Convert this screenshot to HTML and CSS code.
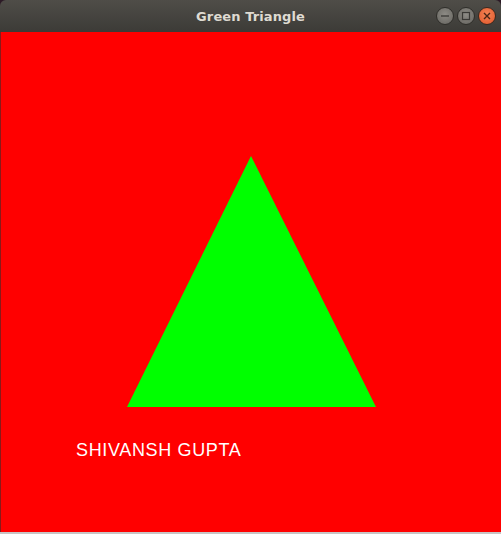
FILE: index.html
```html
<!DOCTYPE html>
<html>
<head>
<meta charset="utf-8">
<link rel="stylesheet" href="styles.css">
</head>
<body>
<div class="window">
  <div class="titlebar">
    <div class="title">Green Triangle</div>
    <div class="controls">
      <span class="btn btn-min"><svg width="18" height="18" viewBox="0 0 18 18"><line x1="5" y1="9" x2="13" y2="9" stroke="#3a3935" stroke-width="1.3"/></svg></span>
      <span class="btn btn-max"><svg width="18" height="18" viewBox="0 0 18 18"><rect x="5.5" y="5.5" width="7" height="7" fill="none" stroke="#3a3935" stroke-width="1.2"/></svg></span>
      <span class="btn btn-close"><svg width="18" height="18" viewBox="0 0 18 18"><path d="M6 6 L12 12 M12 6 L6 12" stroke="#4a2414" stroke-width="1.4"/></svg></span>
    </div>
  </div>
  <div class="canvas">
    <svg class="scene" width="500" height="500" viewBox="0 0 500 500">
      <polygon points="250,124 126,375 375,375" fill="#00ff00"/>
    </svg>
    <div class="label">SHIVANSH GUPTA</div>
  </div>
  <div class="bottom"></div>
</div>
</body>
</html>
```
FILE: styles.css
```css
html, body {
  margin: 0;
  padding: 0;
  background: #2c1a26;
  width: 501px;
  height: 534px;
  overflow: hidden;
}
.window {
  width: 501px;
  height: 534px;
  display: flex;
  flex-direction: column;
}
.titlebar {
  height: 32px;
  flex: none;
  border-radius: 6px 6px 0 0;
  background: linear-gradient(#4f4d48, #3c3b37);
  position: relative;
  display: flex;
  align-items: center;
  justify-content: center;
}
.title {
  font-family: "DejaVu Sans", sans-serif;
  font-weight: bold;
  font-size: 13px;
  color: #dfdbd2;
  letter-spacing: 0.1px;
  padding-top: 1px;
}
.controls {
  position: absolute;
  right: 5px;
  top: 7px;
  display: flex;
  gap: 3px;
}
.btn {
  width: 18px;
  height: 18px;
  border-radius: 50%;
  display: block;
  box-sizing: border-box;
}
.btn svg { display: block; }
.btn-min, .btn-max {
  background: radial-gradient(circle at 50% 40%, #8d8b85, #65635e);
  border: 1px solid #2f2e2a;
}
.btn-min svg, .btn-max svg, .btn-close svg { margin: -1px; }
.btn-close {
  background: radial-gradient(circle at 50% 40%, #f48455, #e0552a);
  border: 1px solid #3a2a20;
}
.canvas {
  position: relative;
  height: 500px;
  flex: none;
  background: #ff0000;
  border-left: 1px solid #8a1a1a;
}
.scene {
  position: absolute;
  left: 0;
  top: 0;
}
.label {
  position: absolute;
  left: 75px;
  top: 408px;
  font-family: "Liberation Sans", Arial, sans-serif;
  font-size: 18px;
  color: #ffffff;
  letter-spacing: 0.65px;
}
.bottom {
  flex: 1;
  background: #c8c4c4;
}
```
